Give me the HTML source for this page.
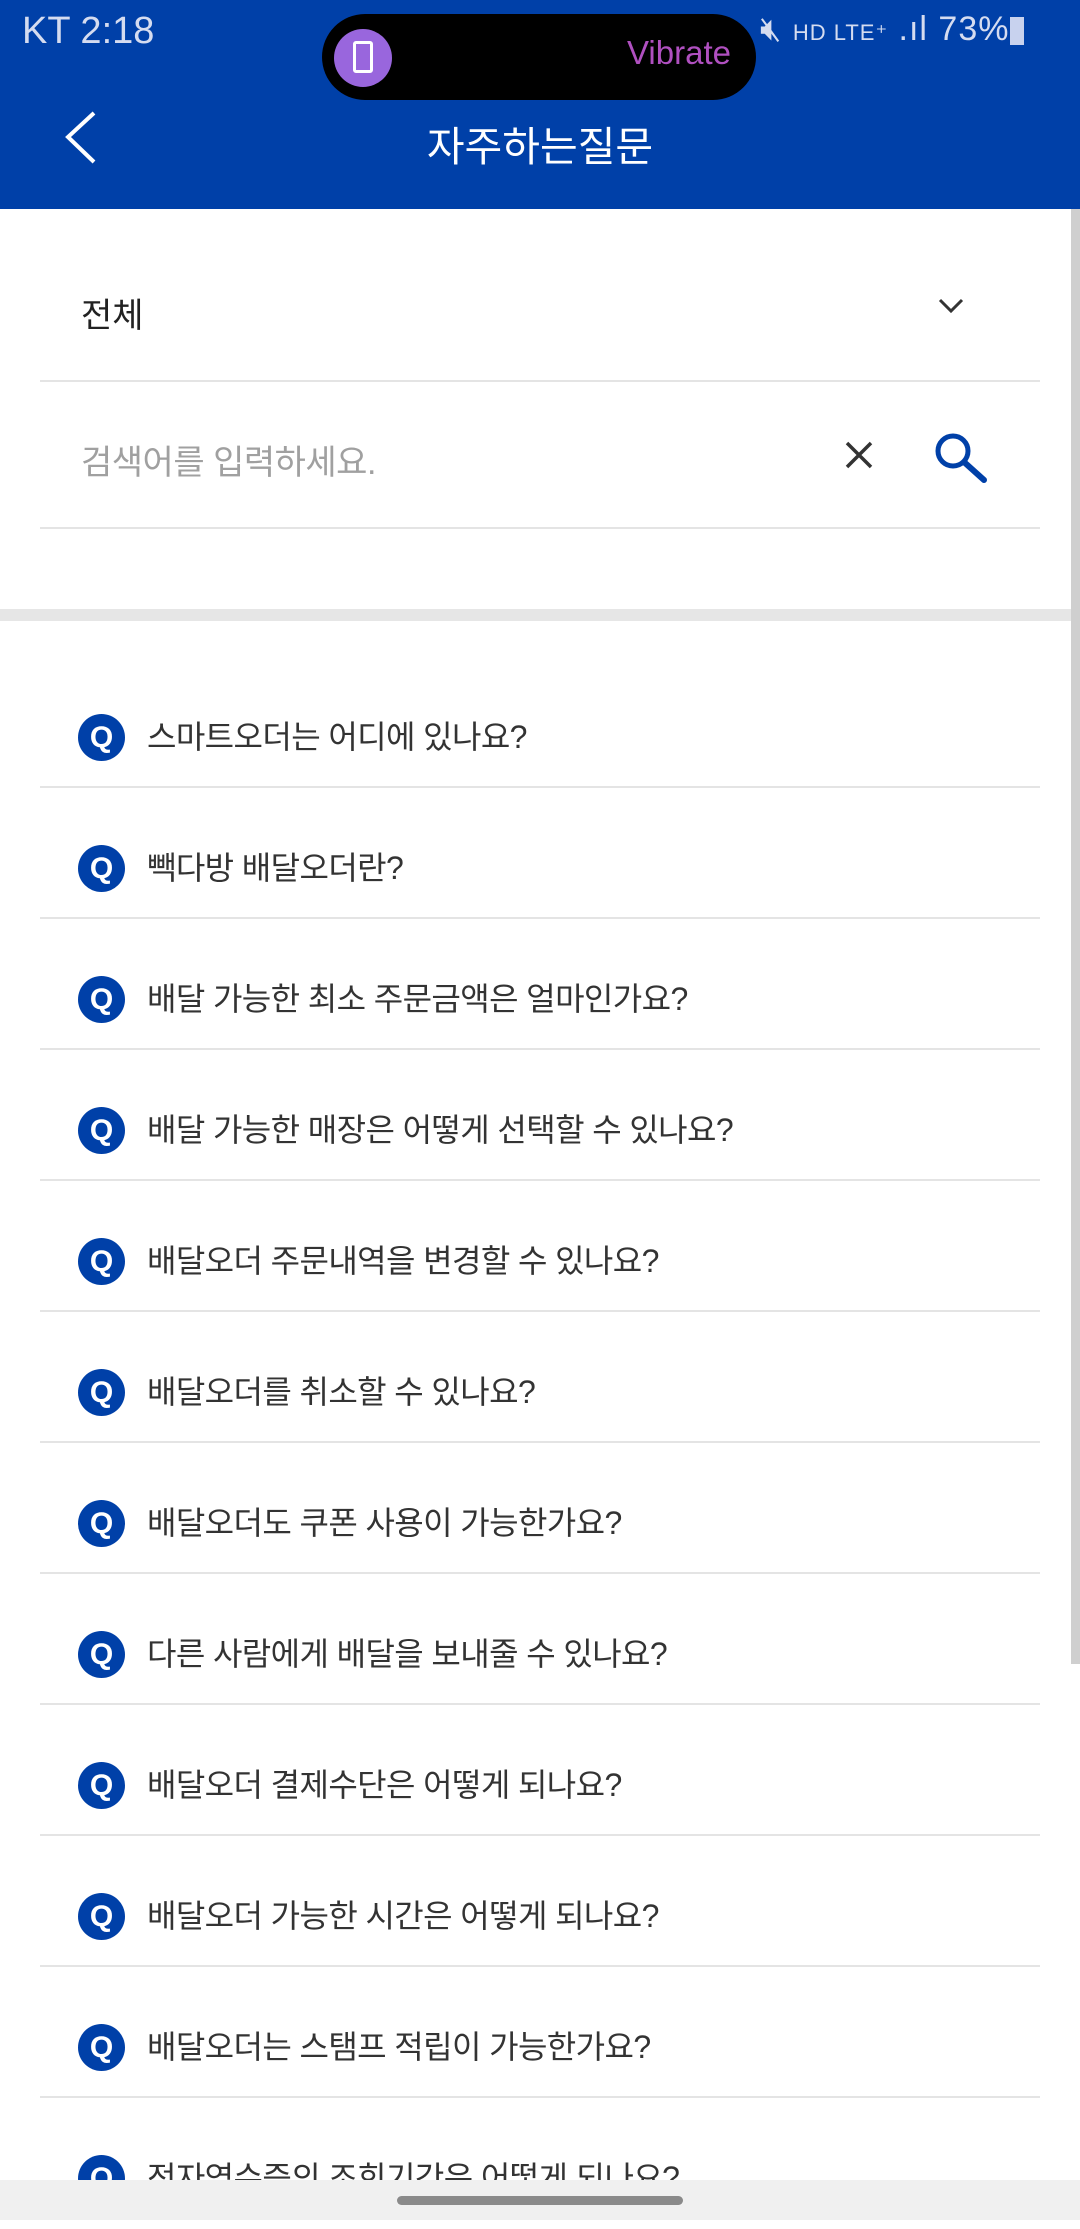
<!DOCTYPE html>
<html><head><meta charset="utf-8"><style>
*{margin:0;padding:0;box-sizing:border-box}
body{width:1080px;height:2220px;overflow:hidden;background:#fff;font-family:"Liberation Sans","Noto Sans CJK KR",sans-serif;position:relative}
.hdr{position:absolute;left:0;top:0;width:1080px;height:209px;background:#0040a8}
.abs{position:absolute}
.item{position:absolute;left:40px;width:1000px;height:131px;border-bottom:2px solid #e4e4e4}
.q{position:absolute;left:38px;top:57px;width:47px;height:47px;border-radius:50%;background:#0040a8;color:#fff;font-weight:bold;font-size:30px;text-align:center;line-height:47px;font-family:"Liberation Sans",sans-serif}
.t{position:absolute;left:107px;top:58px;font-size:32px;letter-spacing:-0.6px;color:#333;line-height:44px;white-space:nowrap}
</style></head><body>
<div class="hdr"></div>
<div class="abs" style="left:22px;top:10px;font-size:38px;color:#d5dcf0">KT 2:18</div>
<div class="abs" style="left:322px;top:14px;width:434px;height:86px;background:#000;border-radius:43px"></div>
<div class="abs" style="left:334px;top:29px;width:58px;height:58px;border-radius:50%;background:#9966dd"></div>
<div class="abs" style="left:353px;top:41px;width:20px;height:32px;border:3px solid #fff;border-radius:3px"></div>
<div class="abs" style="left:627px;top:34px;font-size:33px;color:#b050c0">Vibrate</div>
<div class="abs" style="left:760px;top:10px;font-size:34px;color:#d5dcf0;letter-spacing:1px">🔇︎ <span style="font-size:22px">HD LTE⁺</span> .ıl 73%</div>
<div class="abs" style="left:1010px;top:17px;width:14px;height:28px;background:#c8d2ee"></div>
<svg class="abs" style="left:60px;top:110px" width="40" height="55"><polyline points="34,3 8,27 34,52" fill="none" stroke="#fff" stroke-width="4"/></svg>
<div class="abs" style="left:0;top:113px;width:1080px;text-align:center;font-size:41px;color:#fff">자주하는질문</div>
<div class="abs" style="left:81px;top:288px;font-size:34px;color:#222">전체</div>
<svg class="abs" style="left:937px;top:296px" width="28" height="20"><polyline points="3,4 14,15 25,4" fill="none" stroke="#333" stroke-width="3"/></svg>
<div class="abs" style="left:40px;top:380px;width:1000px;height:2px;background:#e4e4e4"></div>
<div class="abs" style="left:81px;top:435px;font-size:34px;letter-spacing:-0.5px;color:#a0a0a0">검색어를 입력하세요.</div>
<svg class="abs" style="left:844px;top:440px" width="30" height="30"><path d="M3 3L27 27M27 3L3 27" stroke="#333" stroke-width="3.5"/></svg>
<svg class="abs" style="left:930px;top:428px" width="60" height="60"><circle cx="23" cy="23" r="15" fill="none" stroke="#0040a8" stroke-width="5"/><path d="M34 34L54 52" stroke="#0040a8" stroke-width="6" stroke-linecap="round"/></svg>
<div class="abs" style="left:40px;top:527px;width:1000px;height:2px;background:#e4e4e4"></div>
<div class="abs" style="left:0;top:609px;width:1080px;height:12px;background:#e6e6e6"></div>
<div class="abs" style="left:1071px;top:209px;width:9px;height:1455px;background:#cfcfcf"></div>
<div class="item" style="top:657px"><div class="q">Q</div><div class="t">스마트오더는 어디에 있나요?</div></div>
<div class="item" style="top:788px"><div class="q">Q</div><div class="t">빽다방 배달오더란?</div></div>
<div class="item" style="top:919px"><div class="q">Q</div><div class="t">배달 가능한 최소 주문금액은 얼마인가요?</div></div>
<div class="item" style="top:1050px"><div class="q">Q</div><div class="t">배달 가능한 매장은 어떻게 선택할 수 있나요?</div></div>
<div class="item" style="top:1181px"><div class="q">Q</div><div class="t">배달오더 주문내역을 변경할 수 있나요?</div></div>
<div class="item" style="top:1312px"><div class="q">Q</div><div class="t">배달오더를 취소할 수 있나요?</div></div>
<div class="item" style="top:1443px"><div class="q">Q</div><div class="t">배달오더도 쿠폰 사용이 가능한가요?</div></div>
<div class="item" style="top:1574px"><div class="q">Q</div><div class="t">다른 사람에게 배달을 보내줄 수 있나요?</div></div>
<div class="item" style="top:1705px"><div class="q">Q</div><div class="t">배달오더 결제수단은 어떻게 되나요?</div></div>
<div class="item" style="top:1836px"><div class="q">Q</div><div class="t">배달오더 가능한 시간은 어떻게 되나요?</div></div>
<div class="item" style="top:1967px"><div class="q">Q</div><div class="t">배달오더는 스탬프 적립이 가능한가요?</div></div>
<div class="item" style="top:2098px;border:none"><div class="q">Q</div><div class="t">전자영수증의 조회기간은 어떻게 되나요?</div></div>
<div class="abs" style="left:0;top:2180px;width:1080px;height:40px;background:#f0f0f0"></div>
<div class="abs" style="left:397px;top:2196px;width:286px;height:9px;border-radius:5px;background:#8a8a8a"></div>
</body></html>
